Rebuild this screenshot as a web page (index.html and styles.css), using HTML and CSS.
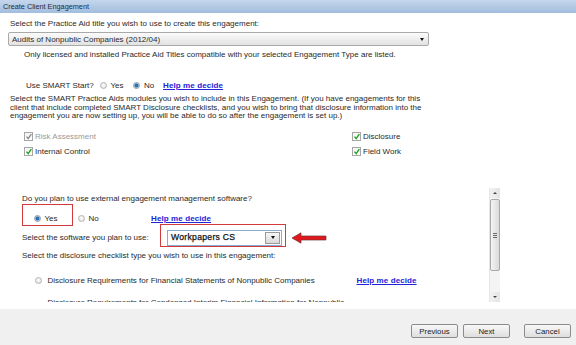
FILE: index.html
```html
<!DOCTYPE html>
<html lang="en">
<head>
  <meta charset="UTF-8">
  <title>Create Client Engagement</title>
  <link rel="stylesheet" href="styles.css">
</head>
<body>
  <div class="window">
    <div class="titlebar">Create Client Engagement</div>

    <div class="main">
      <div class="lead">Select the Practice Aid title you wish to use to create this engagement:</div>
      <div class="select wide">
        <span>Audits of Nonpublic Companies (2012/04)</span>
        <span class="caret"></span>
      </div>
      <div class="note">Only licensed and installed Practice Aid Titles compatible with your selected Engagement Type are listed.</div>

      <div class="smart-row">
        <span class="smart-label">Use SMART Start?</span>
        <label class="opt smart-yes"><span class="radio"></span>Yes</label>
        <label class="opt smart-no"><span class="radio on"></span>No</label>
        <a class="help" href="#">Help me decide</a>
      </div>

      <p class="para">
        Select the SMART Practice Aids modules you wish to include in this Engagement. (If you have engagements for this<br>
        client that include completed SMART Disclosure checklists, and you wish to bring that disclosure information into the<br>
        engagement you are now setting up, you will be able to do so after the engagement is set up.)
      </p>

      <div class="modules">
        <label class="check disabled"><span class="box"><svg viewBox="0 0 9 9"><path d="M1.8 4.6 L3.8 7 L7.6 1.6"/></svg></span>Risk Assessment</label>
        <label class="check"><span class="box"><svg viewBox="0 0 9 9"><path d="M1.8 4.6 L3.8 7 L7.6 1.6"/></svg></span>Disclosure</label>
        <label class="check"><span class="box"><svg viewBox="0 0 9 9"><path d="M1.8 4.6 L3.8 7 L7.6 1.6"/></svg></span>Internal Control</label>
        <label class="check"><span class="box"><svg viewBox="0 0 9 9"><path d="M1.8 4.6 L3.8 7 L7.6 1.6"/></svg></span>Field Work</label>
      </div>
    </div>

    <div class="panel">
      <div class="panel-body">
        <div class="q">Do you plan to use external engagement management software?</div>
        <div class="ext-row">
          <label class="opt ext-yes"><span class="radio on"></span>Yes</label>
          <label class="opt ext-no"><span class="radio"></span>No</label>
          <a class="help" href="#">Help me decide</a>
        </div>
        <div class="soft-row">
          <span class="soft-label">Select the software you plan to use:</span>
          <div class="select combo">
            <span>Workpapers CS</span>
            <span class="combo-btn"><span class="caret"></span></span>
          </div>
        </div>
        <div class="q checklist">Select the disclosure checklist type you wish to use in this engagement:</div>
        <div class="list-row">
          <span class="radio"></span>
          <span class="list-text">Disclosure Requirements for Financial Statements of Nonpublic Companies</span>
          <a class="help" href="#">Help me decide</a>
        </div>
        <div class="list-row cut">
          <span class="radio hidden"></span>
          <span class="list-text">Disclosure Requirements for Condensed Interim Financial Information for Nonpublic</span>
        </div>

        <div class="mark mark-yes"></div>
        <div class="mark mark-soft"></div>
        <svg class="arrow" viewBox="0 0 36 12">
          <path d="M1 6 L10 0.8 L10 4 L35 4 L35 8 L10 8 L10 11.2 Z"/>
        </svg>
      </div>
      <div class="scrollbar">
        <div class="sb-btn"><span class="tri up"></span></div>
        <div class="sb-thumb"><span class="grip"></span></div>
        <div class="sb-track"></div>
        <div class="sb-btn"><span class="tri down"></span></div>
      </div>
    </div>

    <div class="footer">
      <button class="btn">Previous</button>
      <button class="btn">Next</button>
      <button class="btn cancel">Cancel</button>
    </div>
  </div>
</body>
</html>
```

FILE: styles.css
```css
body {
  margin: 0;
  font-family: "Liberation Sans", Arial, sans-serif;
  font-size: 8px;
  color: #2a2a2a;
  background: #fff;
}
.window {
  width: 576px;
  height: 345px;
  display: flex;
  flex-direction: column;
  overflow: hidden;
}
.titlebar {
  height: 13px;
  line-height: 13px;
  padding-left: 3px;
  font-size: 7.3px;
  color: #1c2d44;
  background: linear-gradient(#c4d6ec, #a2bddd);
  flex-shrink: 0;
}
.main {
  padding: 6px 0 0 8px;
  line-height: 9px;
}
.lead {
  margin-left: 2px;
  height: 9px;
}
.select {
  display: flex;
  align-items: center;
  justify-content: space-between;
  box-sizing: border-box;
}
.select.wide {
  margin-top: 4px;
  width: 421px;
  height: 14px;
  padding: 0 4px 0 3px;
  border: 1px solid #a9a9a9;
  border-radius: 2px;
  background: linear-gradient(#fbfbfb, #e2e2e2);
}
.caret {
  width: 0;
  height: 0;
  border-left: 2.5px solid transparent;
  border-right: 2.5px solid transparent;
  border-top: 3px solid #111;
}
.note {
  margin: 4px 0 0 16px;
  height: 9px;
}
.smart-row {
  display: flex;
  align-items: center;
  margin: 22px 0 0 18px;
  height: 9px;
}
.smart-label {
  width: 73.5px;
}
.opt {
  display: flex;
  align-items: center;
  gap: 4px;
}
.smart-yes { width: 33.5px; }
.smart-no { width: 30px; }
.radio {
  width: 7px;
  height: 7px;
  box-sizing: border-box;
  border-radius: 50%;
  border: 1px solid #b4b4b4;
  background: radial-gradient(circle at 50% 40%, #fdfdfd, #dcdcdc);
  flex-shrink: 0;
}
.radio.on {
  border-color: #8f9aa6;
  background: radial-gradient(circle, #2f6fb0 0 1.6px, #9cc3e6 2.2px, #e8eef4 3px);
}
.radio.hidden {
  visibility: hidden;
}
.help {
  color: #2323d8;
  font-weight: bold;
  letter-spacing: 0.1px;
  text-decoration: underline;
}
.para {
  margin: 5px 0 0 2px;
  line-height: 8.5px;
}
.modules {
  display: grid;
  grid-template-columns: 328px auto;
  row-gap: 5px;
  margin: 10.5px 0 0 16px;
}
.check {
  display: flex;
  align-items: center;
  gap: 2px;
  height: 10px;
}
.check.disabled {
  color: #999;
}
.box {
  width: 9px;
  height: 9px;
  box-sizing: border-box;
  border: 1px solid #a6a6a6;
  background: linear-gradient(#f4f4f4, #fff);
  display: flex;
}
.box svg {
  width: 9px;
  height: 9px;
  margin: -1px 0 0 -0.5px;
  fill: none;
  stroke: #21a121;
  stroke-width: 1.7;
}
.check.disabled .box svg {
  stroke: #8c8c8c;
}
.panel {
  margin-top: 32px;
  height: 114px;
  width: 500px;
  display: flex;
  flex-shrink: 0;
}
.panel-body {
  position: relative;
  flex: 1;
  overflow: hidden;
  padding: 5.5px 0 0 22px;
  line-height: 9px;
}
.q {
  height: 9px;
}
.ext-row {
  display: flex;
  align-items: center;
  height: 9px;
  margin-top: 11.5px;
  padding-left: 11.5px;
}
.ext-yes { width: 44px; }
.ext-no { width: 73.5px; }
.soft-row {
  display: flex;
  align-items: center;
  height: 16px;
  margin-top: 6.5px;
}
.soft-label {
  width: 145px;
}
.select.combo {
  width: 115px;
  height: 16px;
  padding-left: 3px;
  border: 1px solid #86acd4;
  background: #fff;
  font-size: 8.6px;
  letter-spacing: 0.3px;
  color: #111;
  -webkit-text-stroke: 0.25px #111;
}
.combo-btn {
  width: 15px;
  height: 12px;
  margin-right: 1px;
  box-sizing: border-box;
  border: 1px solid #9a9a9a;
  background: linear-gradient(#f7f7f7, #d9d9d9);
  display: flex;
  align-items: center;
  justify-content: center;
}
.q.checklist {
  margin-top: 5.5px;
}
.list-row {
  display: flex;
  align-items: center;
  height: 9px;
  margin-top: 16px;
  padding-left: 12.5px;
}
.list-row .list-text {
  margin-left: 6px;
  width: 309px;
}
.list-row.cut {
  margin-top: 12.5px;
}
.mark {
  position: absolute;
  border: 1.5px solid #d23a3a;
}
.mark-yes {
  left: 22px;
  top: 16px;
  width: 49px;
  height: 20px;
}
.mark-soft {
  left: 160px;
  top: 36px;
  width: 124px;
  height: 21px;
}
.arrow {
  position: absolute;
  left: 291px;
  top: 44px;
  width: 36px;
  height: 12px;
  fill: #e3161b;
  stroke: #6b3a3a;
  stroke-width: 0.7;
}
.scrollbar {
  width: 10px;
  display: flex;
  flex-direction: column;
  background: #f4f4f4;
  border-left: 1px solid #e6e6e6;
}
.sb-btn {
  height: 10px;
  display: flex;
  align-items: center;
  justify-content: center;
  background: linear-gradient(90deg, #f2f2f2, #e4e4e4);
}
.tri {
  width: 0;
  height: 0;
  border-left: 2px solid transparent;
  border-right: 2px solid transparent;
}
.tri.up { border-bottom: 2.5px solid #444; }
.tri.down { border-top: 2.5px solid #444; }
.sb-thumb {
  margin-top: 1px;
  height: 72px;
  box-sizing: border-box;
  border: 1px solid #a9a9a9;
  border-radius: 2px;
  background: linear-gradient(90deg, #f4f4f4, #dadada);
  display: flex;
  align-items: center;
  justify-content: center;
}
.grip {
  width: 4px;
  height: 5px;
  background: repeating-linear-gradient(#6a6a6a 0 1px, transparent 1px 2px);
}
.sb-track {
  flex: 1;
}
.footer {
  margin-top: 7px;
  flex: 1;
  background: #f0f0f0;
  display: flex;
  justify-content: flex-end;
  align-items: flex-start;
  padding: 15px 5px 0 0;
  gap: 5px;
}
.btn {
  width: 47px;
  height: 14px;
  padding: 0;
  font-family: inherit;
  font-size: 7.8px;
  color: #222;
  border: 1px solid #8c8c8c;
  border-radius: 2px;
  background: linear-gradient(#f8f8f8, #dedede);
}
.btn.cancel {
  margin-left: 9px;
}
```
